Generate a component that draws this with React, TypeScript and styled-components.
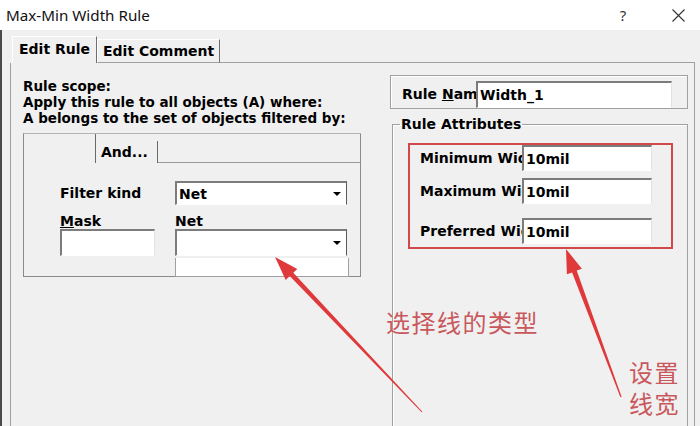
import React from "react";
import styled, { createGlobalStyle } from "styled-components";

const GlobalStyle = createGlobalStyle`
  html, body {
    margin: 0;
    padding: 0;
    background: #f0f0f0;
  }
  body {
    font-family: "DejaVu Sans", "Liberation Sans", sans-serif;
    color: #000;
  }
`;

const Window = styled.div`
  position: relative;
  width: 700px;
  height: 426px;
  overflow: hidden;
  background: #f0f0f0;
  display: flex;
  flex-direction: column;
`;

const TitleBar = styled.div`
  height: 30px;
  flex: none;
  background: #fff;
  display: flex;
  align-items: center;
  padding-left: 6px;
  font-family: "Noto Sans", "Open Sans", sans-serif;
  font-size: 15.2px;
  color: #111;
`;

const TitleText = styled.span`
  flex: 1;
`;

const TitleButton = styled.div<{ $w: number }>`
  width: ${(p) => p.$w}px;
  height: 30px;
  display: flex;
  align-items: center;
  justify-content: center;
  color: #333;
  font-size: 15px;
`;

const Body = styled.div`
  flex: 1;
  min-height: 0;
  border-left: 2px solid #4a4a4a;
  padding: 6px 5px 0 8px;
  display: flex;
  flex-direction: column;
`;

const TabStrip = styled.div`
  height: 27px;
  flex: none;
  display: flex;
  align-items: flex-end;
  padding-left: 2px;
`;

const Tab = styled.div<{ $active?: boolean }>`
  box-sizing: border-box;
  height: ${(p) => (p.$active ? 27 : 24)}px;
  padding: ${(p) => (p.$active ? "0 6px 3px" : "0 5px")};
  display: flex;
  align-items: center;
  font-weight: bold;
  font-size: 14px;
  border-top: 1px solid #fff;
  border-left: 1px solid #fff;
  border-right: 1px solid #6e6e6e;
  border-bottom: ${(p) => (p.$active ? "none" : "1px solid #a0a0a0")};
`;

const TabFiller = styled.div`
  flex: 1;
  border-bottom: 1px solid #a0a0a0;
`;

const TabPage = styled.div`
  flex: 1;
  display: flex;
  border-left: 1px solid #a0a0a0;
  border-right: 1px solid #a0a0a0;
`;

const LeftCol = styled.div`
  width: 379px;
  flex: none;
  padding-left: 12px;
  box-sizing: border-box;
`;

const ScopeText = styled.div`
  padding-top: 15px;
  font-weight: bold;
  font-size: 13.5px;
  line-height: 16px;
  white-space: nowrap;
`;

const FilterBox = styled.div`
  margin-top: 7px;
  width: 337px;
  border-top: 1px solid #b4b4b4;
  border-left: 1px solid #8a8a8a;
  display: flex;
  flex-direction: column;
`;

const InnerTabs = styled.div`
  height: 29px;
  display: flex;
  align-items: flex-end;
`;

const InnerTab = styled.div<{ $w: number; $h: number }>`
  box-sizing: border-box;
  width: ${(p) => p.$w}px;
  height: ${(p) => p.$h}px;
  border-right: 1px solid #6a6a6a;
  padding-left: 5px;
  display: flex;
  align-items: center;
  font-weight: bold;
  font-size: 14px;
`;

const InnerFiller = styled.div`
  flex: 1;
  height: 100%;
  border-bottom: 1px solid #9a9a9a;
  border-right: 1px solid #8a8a8a;
  box-sizing: border-box;
`;

const InnerPage = styled.div`
  border-right: 1px solid #8a8a8a;
  border-bottom: 1px solid #8a8a8a;
  padding: 18px 0 0 36px;
  display: grid;
  grid-template-columns: 115px 174px;
  align-items: center;
`;

const Label = styled.div<{ $top?: number }>`
  font-weight: bold;
  font-size: 14px;
  line-height: 16px;
  margin-top: ${(p) => p.$top ?? 0}px;
  white-space: nowrap;
`;

const Field = styled.div<{ $w: number; $h: number }>`
  box-sizing: border-box;
  width: ${(p) => p.$w}px;
  height: ${(p) => p.$h}px;
  background: #fff;
  border-top: 2px solid #7c7c7c;
  border-left: 2px solid #7c7c7c;
  border-right: 1px solid #e2e2e2;
  border-bottom: 1px solid #fff;
  display: flex;
  align-items: center;
  padding-left: 2px;
  font-weight: bold;
  font-size: 14px;
  white-space: nowrap;
  overflow: hidden;
`;

const Select = styled(Field)`
  border-right: 1px solid #5a5a5a;
  padding-right: 0;
`;

const SelectValue = styled.span`
  flex: 1;
`;

const ArrowBox = styled.div`
  width: 18px;
  height: 100%;
  display: flex;
  align-items: center;
  justify-content: center;
`;

const Caret = styled.div`
  width: 0;
  height: 0;
  border-left: 4px solid transparent;
  border-right: 4px solid transparent;
  border-top: 4px solid #000;
`;

const DropList = styled.div`
  grid-column: 2;
  margin-top: 2px;
  width: 174px;
  height: 19px;
  box-sizing: border-box;
  background: #fff;
  border: 1px solid #a0a0a0;
  border-top: none;
  margin-bottom: -1px;
`;

const RightCol = styled.div`
  flex: 1;
  padding: 12px 6px 0 0;
  display: flex;
  flex-direction: column;
`;

const RuleNameGroup = styled.div`
  box-sizing: border-box;
  height: 34px;
  border: 1px solid #a0a0a0;
  box-shadow: inset 1px 1px 0 #fff;
  display: flex;
  align-items: flex-end;
  padding: 0 14px 0 11px;
`;

const RuleNameLabel = styled.div`
  width: 74px;
  height: 27px;
  line-height: 27px;
  overflow: hidden;
  white-space: nowrap;
  font-weight: bold;
  font-size: 14px;
`;

const AttrGroup = styled.fieldset`
  margin: 7px 0 0 2px;
  padding: 0;
  height: 320px;
  border: 1px solid #a0a0a0;
  box-shadow: inset 1px 1px 0 #fff;
`;

const AttrLegend = styled.legend`
  margin-left: 7px;
  padding: 0 1px;
  font-weight: bold;
  font-size: 14px;
  line-height: 16px;
`;

const RedBox = styled.div`
  box-sizing: border-box;
  width: 265px;
  margin: 11px 0 0 15px;
  border: 2px solid #d04a4c;
  padding: 0 19px 3px 10px;
  display: flex;
  flex-direction: column;
`;

const AttrRow = styled.div<{ $gap: number }>`
  display: flex;
  align-items: center;
  margin-top: ${(p) => p.$gap}px;
`;

const AttrLabel = styled.div`
  width: 102px;
  overflow: hidden;
  white-space: nowrap;
  font-weight: bold;
  font-size: 14px;
`;

const Overlay = styled.svg`
  position: absolute;
  left: 0;
  top: 0;
  pointer-events: none;
`;

const Note = styled.div<{ $x: number; $y: number }>`
  position: absolute;
  left: ${(p) => p.$x}px;
  top: ${(p) => p.$y}px;
  font-family: "Noto Sans CJK SC", "Noto Sans", sans-serif;
  font-size: 24px;
  line-height: 31px;
  letter-spacing: 1.5px;
  color: #c8585c;
  white-space: nowrap;
`;

const rows = [
  { label: "Minimum Width", gap: 0 },
  { label: "Maximum Width", gap: 7 },
  { label: "Preferred Width", gap: 14 },
];

const App = () => {
  return (
    <Window>
      <GlobalStyle />
      <TitleBar>
        <TitleText>Max-Min Width Rule</TitleText>
        <TitleButton $w={66}>?</TitleButton>
        <TitleButton $w={44}>
          <svg width="13" height="13" viewBox="0 0 13 13">
            <path d="M0.5 0.5 L12.5 12.5 M12.5 0.5 L0.5 12.5" stroke="#333" strokeWidth="1.1" />
          </svg>
        </TitleButton>
      </TitleBar>

      <Body>
        <TabStrip>
          <Tab $active>Edit Rule</Tab>
          <Tab>Edit Comment</Tab>
          <TabFiller />
        </TabStrip>

        <TabPage>
          <LeftCol>
            <ScopeText>
              Rule scope:
              <br />
              Apply this rule to all objects (A) where:
              <br />
              A belongs to the set of objects filtered by:
            </ScopeText>

            <FilterBox>
              <InnerTabs>
                <InnerTab $w={72} $h={29} />
                <InnerTab $w={62} $h={22}>
                  And...
                </InnerTab>
                <InnerFiller />
              </InnerTabs>
              <InnerPage>
                <Label>Filter kind</Label>
                <Select $w={172} $h={24}>
                  <SelectValue>Net</SelectValue>
                  <ArrowBox>
                    <Caret />
                  </ArrowBox>
                </Select>
                <Label $top={8}>
                  <u>M</u>ask
                </Label>
                <Label $top={8}>Net</Label>
                <Field $w={95} $h={27} />
                <Select $w={172} $h={27}>
                  <SelectValue />
                  <ArrowBox>
                    <Caret />
                  </ArrowBox>
                </Select>
                <DropList />
              </InnerPage>
            </FilterBox>
          </LeftCol>

          <RightCol>
            <RuleNameGroup>
              <RuleNameLabel>
                Rule <u>N</u>ame
              </RuleNameLabel>
              <Field $w={196} $h={27}>
                Width_1
              </Field>
            </RuleNameGroup>

            <AttrGroup>
              <AttrLegend>Rule Attributes</AttrLegend>
              <RedBox>
                {rows.map((r) => (
                  <AttrRow key={r.label} $gap={r.gap}>
                    <AttrLabel>{r.label}</AttrLabel>
                    <Field $w={130} $h={26}>
                      10mil
                    </Field>
                  </AttrRow>
                ))}
              </RedBox>
            </AttrGroup>
          </RightCol>
        </TabPage>
      </Body>

      <Overlay width="700" height="426" viewBox="0 0 700 426">
        <polygon
          points="275,257 297.3,268.9 293.3,272.7 422.4,411.7 421.6,412.3 289.7,276.1 285.7,279.9"
          fill="#e0393b"
        />
        <polygon
          points="566,249 581.9,268.7 576.7,270.6 621.6,396.8 620.4,397.2 572.1,272.4 566.9,274.3"
          fill="#e0393b"
        />
      </Overlay>

      <Note $x={386} $y={306}>选择线的类型</Note>
      <Note $x={629} $y={356}>
        设置
        <br />
        线宽
      </Note>
    </Window>
  );
};

export default App;
